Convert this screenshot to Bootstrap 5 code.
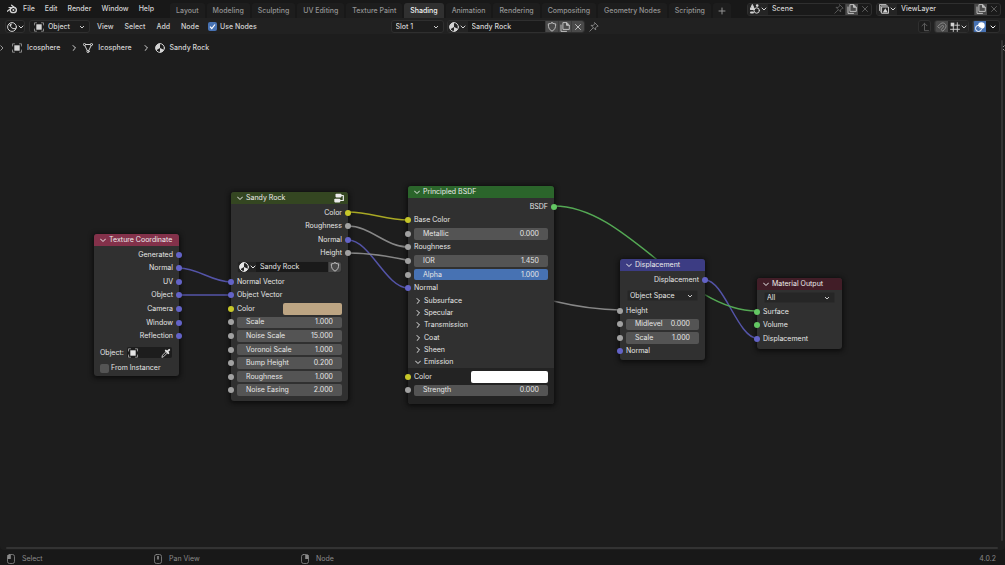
<!DOCTYPE html>
<html lang="en" data-bs-theme="dark">
<head>
<meta charset="utf-8">
<meta name="viewport" content="width=device-width, initial-scale=1">
<title>Shading – Sandy Rock</title>
<link href="https://cdn.jsdelivr.net/npm/bootstrap@5.3.0/dist/css/bootstrap.min.css" rel="stylesheet">
<style>
  :root { --purple:#6363c7; --yellow:#c7c729; --grey:#a1a1a1; --green:#63c763; --line:#2f2f2f; }
  body { font-family:Inter,"Liberation Sans",sans-serif; font-size:7px; font-weight:500; line-height:10px; background:#181818; color:#d4d4d4; }
  button, input, select { font:inherit; color:inherit; background:none; border:0; padding:0; margin:0; border-radius:0; }
  button { display:flex; align-items:center; justify-content:center; white-space:nowrap; }
  a { color:inherit; text-decoration:none; }
  svg { display:block; flex:none; overflow:visible; }
  .ic { width:10px; height:10px; fill:none; stroke:currentColor; stroke-width:1; stroke-linecap:round; stroke-linejoin:round; }
  .chev { width:6px; height:6px; }
  .pick { appearance:none; cursor:pointer; background:no-repeat right 4px center/6px 6px url("data:image/svg+xml,%3Csvg xmlns='http://www.w3.org/2000/svg' viewBox='0 0 6 6'%3E%3Cpath d='M1 2l2 2 2-2' fill='none' stroke='%23ccc'/%3E%3C/svg%3E"); }

  .topbar { height:18px; }
  .menus { gap:10px; padding-left:7px; }
  .brand { margin-right:-4px; }
  .tabs { margin-left:16px; gap:2px; padding-top:3px; }
  .tabs button { padding:0 6px; height:15px; background:#1d1d1d; color:#949494; border-radius:3px 3px 0 0; }
  .tabs .active { background:#303030; color:#f4f4f4; }
  .idbox { height:13px; width:125px; border:1px solid var(--line); border-radius:3px; background:#1a1a1a; overflow:hidden; }
  .idbox > button, .matbox > button { height:100%; }
  .idbox input, .matbox input { flex:1 1 0; min-width:0; padding-left:4px; background:#1a1a1a; }
  .drop { width:20px; gap:1px; background:#242424; }
  .tool { width:13px; background:#4a4a4a; color:#bdbdbd; border-left:1px solid #3c3c3c; }
  .lit { background:#4772b3; color:#fff; }
  .flat { width:13px; color:#5c5c5c; }
  .dim { color:#8a8a8a; }

  .toolrow { height:16px; background:#212121; padding:1px 5px 0; }
  .side { flex:1 1 0; }
  .side.tools { gap:3px; }
  .toolmenus { gap:11px; margin-left:7px; }
  .usenodes { gap:3px; margin-left:9px; }
  .box { height:13px; border:1px solid var(--line); border-radius:3px; background-color:#1d1d1d; }
  .modes { width:61px; }
  .modes select { flex:1 1 0; min-width:0; padding-left:4px; }
  .slotpick { width:53px; padding-left:4px; }
  .slots { margin-right:14px; gap:3px; }
  .matbox { height:13px; border:1px solid var(--line); border-radius:3px; overflow:hidden; background:#1a1a1a; }
  .slots .matbox { width:138px; }
  .tick { appearance:none; width:9px; height:9px; border-radius:2px; background:#545454; flex:none; }
  .tick:checked { background:#4772b3 center/7px 7px no-repeat url("data:image/svg+xml,%3Csvg xmlns='http://www.w3.org/2000/svg' viewBox='0 0 7 7'%3E%3Cpath d='M1 3.7l1.8 1.8L6 1.5' fill='none' stroke='%23fff' stroke-width='1.2'/%3E%3C/svg%3E"); }

  .canvas { background:#1d1d1d; min-height:0; overflow:hidden; border-radius:0 0 4px 4px; }
  .crumbs { padding:9px 0 0 12px; }
  .crumbs a { margin:0 11px 0 5px; }
  .crumbs .chev { margin-right:6px; }
  .scroll-y { position:absolute; right:2px; top:6px; bottom:9px; width:2px; background:#333; border-radius:1px; }
  .scroll-x { position:absolute; left:6px; right:7px; bottom:1px; height:2px; background:#333; border-radius:1px; }
  .edge { position:absolute; top:11px; width:4px; height:6px; color:#999; }
  .wires { position:absolute; left:0; top:0; fill:none; stroke-width:1.5; }

  /* graph nodes: free placement on the canvas */
  .gnode { position:absolute; background:#303030; border-radius:3px; box-shadow:0 1px 5px 1px #0b0b0b; font-weight:400; color:#e6e6e6; }
  .gnode h2 { font-size:7px; font-weight:400; line-height:10px; height:12px; margin:0; padding:0 4px 0 6px; gap:3px; border-radius:3px 3px 0 0; display:flex; align-items:center; color:#ececec; }
  #texcoord { left:94px; top:200px; width:85px; height:142px; } #texcoord h2 { background:#83314a; }
  #sandy { left:231px; top:158px; width:117px; height:209px; } #sandy h2 { background:#344621; }
  #bsdf { left:408px; top:152px; width:146px; height:218px; } #bsdf h2 { background:#2b652b; }
  #disp { left:620px; top:225px; width:85px; height:101px; } #disp h2 { background:#3c3c83; }
  #matout { left:757px; top:244px; width:85px; height:71px; } #matout h2 { background:#411d27; }
  .socks { display:grid; grid-template-columns:minmax(0,1fr); grid-auto-rows:1fr; list-style:none; margin:0; padding:0; }
  h2 + .socks { margin-top:2px; }
  .socks li { display:flex; align-items:center; position:relative; padding:0 6px; min-height:0; }
  .socks li.out { justify-content:flex-end; }
  .socks li::before { content:""; position:absolute; width:6px; height:6px; border-radius:50%; background:var(--c); left:-3px; }
  .socks li.out::before { left:auto; right:-3px; }
  .p { --c:var(--purple); } .y { --c:var(--yellow); } .g { --c:var(--grey); } .e { --c:var(--green); }
  .h14 { height:14px; } .h27 { height:27px; } .h41 { height:41px; } .h54 { height:54px; } .h95 { height:95px; } .h122 { height:122px; }
  .num { display:flex; align-items:center; flex:1 1 0; min-width:0; align-self:stretch; margin:1px 0; padding:0 9px; background:#545454; border-radius:2px; white-space:nowrap; }
  .num input { flex:1 1 0; width:0; min-width:0; text-align:right; }
  .num.on { background:#4772b3; }
  .swatch { margin:1px 0 1px auto; align-self:stretch; width:59px; border-radius:2px; }
  .sand { background:#bda583; } .white { width:77px; background:#fff; }
  .pickrow { display:grid; padding:3px 7px; }
  #matout .pickrow { padding:2px 7px; }
  .gpick { height:11px; padding-left:2px; background-color:#262626; border:1px solid #2b2b2b; border-radius:2px; line-height:9px; }
  #sandy .matbox { height:12px; margin:1px 6px 2px; }
  #sandy .matbox .drop { width:18px; }
  .panels { height:73px; display:grid; grid-auto-rows:1fr; padding:0 7px; }
  .panels button { justify-content:flex-start; gap:3px; }
  .subpanel { background:#232323; border-radius:0 0 3px 3px; padding-top:2px; height:36px; }
  .objrow { margin:4px 7px 0 6px; gap:3px; }
  .objfield { flex:1 1 0; height:11px; background:#1d1d1d; border-radius:2px; padding:0 1px; }
  .fromrow { margin:5px 6px 0; gap:2px; }

  .status { height:15px; color:#8a8a8a; padding:2px 9px 0 6px; font-weight:400; }
  .status .hint { width:147px; gap:6px; }
</style>
</head>
<body class="d-flex flex-column vh-100 overflow-hidden">

<svg width="0" height="0" class="position-absolute" aria-hidden="true">
  <symbol id="i-chev" viewBox="0 0 6 6"><path d="M1 2l2 2 2-2"/></symbol>
  <symbol id="i-right" viewBox="0 0 6 6"><path d="M2 .5L4.500 3 2 5.500"/></symbol>
  <symbol id="i-down" viewBox="0 0 6 6"><path d="M.5 2L3 4.500 5.500 2"/></symbol>
  <symbol id="i-blender" viewBox="0 0 10 10"><path d="M.3 7.300L5.200 3.500M2 3.500h4M4.600 1.200L8.300 4" stroke-width="1.200"/><ellipse cx="6.300" cy="6" rx="3.100" ry="2.700" stroke-width="1.300"/><circle cx="6.400" cy="5.900" r="1" fill="currentColor" stroke="none"/></symbol>
  <symbol id="i-sphere" viewBox="0 0 10 10"><circle cx="5" cy="5" r="4.400"/><path d="M8.700 6.500C6.500 7.300 3 6 3.500 3.200"/><path d="M2 3.500Q3 1.700 5 1.600L4 4z" fill="currentColor" stroke="none"/></symbol>
  <symbol id="i-object" viewBox="0 0 10 10"><path d="M.5 3V.8H2.500M7.500 .8h2V3M9.500 7v2.200h-2M2.500 9.200h-2V7" stroke-width=".8" opacity=".7"/><rect x="2.300" y="2.300" width="5.400" height="5.400" fill="currentColor" stroke="none"/></symbol>
  <symbol id="i-mesh" viewBox="0 0 10 10"><path d="M2.800 1.500h4.400M1.900 2.700l2.400 5M8.100 2.700l-2.400 5"/><circle cx="1.500" cy="1.500" r="1.100"/><circle cx="8.500" cy="1.500" r="1.100"/><circle cx="5" cy="8.500" r="1.100"/></symbol>
  <symbol id="i-mat" viewBox="0 0 10 10"><circle cx="5" cy="5" r="4.400"/><path d="M5 .6v4.400l-3.700 2.300A4.400 4.400 0 0 1 5 .6zM5 5l3.900 1.800A4.400 4.400 0 0 1 5 9.400z" fill="currentColor" stroke="none"/></symbol>
  <symbol id="i-shield" viewBox="0 0 10 10"><path d="M5 .8Q3.500 1.900 1.300 1.900C1.300 5.500 2 7.500 5 9.200 8 7.500 8.700 5.500 8.700 1.900 6.500 1.900 5 .8 5 .8z"/></symbol>
  <symbol id="i-copy" viewBox="0 0 10 10"><path d="M3.300 .6h3.500L9.300 3v4.400h-6z"/><path d="M6.500 .8V3.300H9" fill="currentColor"/><path d="M1 3v6.400h5.500"/></symbol>
  <symbol id="i-x" viewBox="0 0 10 10"><path d="M2.500 2.500l5 5M7.500 2.500l-5 5"/></symbol>
  <symbol id="i-pin" viewBox="0 0 10 10"><path d="M5.800 .8l3.400 3.400-1.200.1L6.500 6l.2 2L2 3.300l2 .2 1.700-1.600zM4 6L.8 9.200" stroke-width=".9"/></symbol>
  <symbol id="i-up" viewBox="0 0 10 10"><path d="M2 3.800L4.500 1.300 7 3.800M4.500 1.300v7.400H8.500"/></symbol>
  <symbol id="i-magnet" viewBox="0 0 10 10"><path d="M.9 4.200L3.900 1.500C7 -.5 10.500 3 8.400 6.100L5.900 9.200 4.100 7.700 6.400 5C7 3.800 6 3 5 3.600L2.500 5.900z"/></symbol>
  <symbol id="i-snap" viewBox="0 0 10 10"><path d="M3.300 4v5.500M7.300 .7v8.800M.5 7.300h9M5 3.200h4.500" stroke-width=".9"/><rect x=".7" y=".7" width="3.600" height="3.600" fill="currentColor" stroke="none"/></symbol>
  <symbol id="i-overlay" viewBox="0 0 10 10"><circle cx="3.600" cy="6.400" r="3.100"/><circle cx="6.400" cy="3.600" r="3.300" fill="currentColor" stroke="none"/><path d="M3.400 4.600a3.200 3.200 0 0 0 2.800 2" stroke="#4772b3"/></symbol>
  <symbol id="i-scene" viewBox="0 0 10 10"><path d="M2.500 .8l2 4.700h-4z" fill="currentColor"/><circle cx="6.700" cy="6.500" r="2.700"/><circle cx="7.200" cy="1.600" r="1.300" fill="currentColor" stroke="none"/><path d="M1 8.500h2" stroke-width="2"/></symbol>
  <symbol id="i-layers" viewBox="0 0 10 10"><rect x="3" y="3" width="6.500" height="6.300" stroke-width=".9"/><path d="M3.800 8.500l2.500-4.200 2.500 4.200z" fill="currentColor" stroke="none"/><path d="M1.800 8V1.800h6.500M.5 6.500V.5h6.500" stroke-width=".8"/></symbol>
  <symbol id="i-group" viewBox="0 0 10 10"><g fill="currentColor" stroke="none"><rect x="1.500" y=".8" width="6" height="3.600" rx=".8"/><rect x=".3" y="5.800" width="6" height="3.600" rx=".8"/></g><path d="M7.500 2.500h1.800v5H6.500" stroke-width="1.200"/></symbol>
  <symbol id="i-dropper" viewBox="0 0 10 10"><path d="M1 9l.5-1.800 3.800-3.800 1.300 1.300-3.800 3.800z" stroke-width=".8"/><path d="M4.800 2.600l2.600 2.600M6.300 3.700L8.200 1.800" stroke-width="1.900"/></symbol>
  <symbol id="i-ml" viewBox="0 0 10 10"><rect x="1.500" y=".5" width="7" height="9" rx="2" stroke-width=".8"/><path d="M1.500 1h3.300v4H1.500z" fill="currentColor" stroke="none"/></symbol>
  <symbol id="i-mm" viewBox="0 0 10 10"><rect x="1.500" y=".5" width="7" height="9" rx="2" stroke-width=".8"/><rect x="4.200" y="2" width="1.600" height="3.500" fill="currentColor" stroke="none"/></symbol>
  <symbol id="i-mr" viewBox="0 0 10 10"><rect x="1.500" y=".5" width="7" height="9" rx="2" stroke-width=".8"/><path d="M5.200 1h3.300v4H5.200z" fill="currentColor" stroke="none"/></symbol>
</svg>

<header class="topbar d-flex flex-shrink-0">
  <nav class="menus d-flex align-items-center" aria-label="Main menu">
    <button aria-label="Blender" class="brand"><svg class="ic"><use href="#i-blender"/></svg></button>
    <button>File</button><button>Edit</button><button>Render</button><button>Window</button><button>Help</button>
  </nav>
  <nav class="tabs d-flex" aria-label="Workspaces">
    <button>Layout</button><button>Modeling</button><button>Sculpting</button><button>UV Editing</button><button>Texture Paint</button><button class="active">Shading</button><button>Animation</button><button>Rendering</button><button>Compositing</button><button>Geometry Nodes</button><button>Scripting</button><button aria-label="Add workspace"><svg class="ic chev"><path d="M3 0v6M0 3h6"/></svg></button>
  </nav>
  <div class="ms-auto d-flex gap-1 align-items-center pe-1">
    <div class="idbox d-flex align-items-center">
      <button class="drop" aria-label="Browse scene"><svg class="ic"><use href="#i-scene"/></svg><svg class="ic chev"><use href="#i-chev"/></svg></button>
      <input aria-label="Scene" value="Scene">
      <button class="flat" aria-label="Pin scene"><svg class="ic"><use href="#i-pin"/></svg></button>
      <button class="tool" aria-label="New scene"><svg class="ic"><use href="#i-copy"/></svg></button>
      <button class="flat" aria-label="Delete scene"><svg class="ic"><use href="#i-x"/></svg></button>
    </div>
    <div class="idbox d-flex align-items-center">
      <button class="drop" aria-label="Browse view layer"><svg class="ic"><use href="#i-layers"/></svg><svg class="ic chev"><use href="#i-chev"/></svg></button>
      <input aria-label="View layer" value="ViewLayer">
      <button class="tool" aria-label="New view layer"><svg class="ic"><use href="#i-copy"/></svg></button>
      <button class="flat" aria-label="Remove view layer"><svg class="ic"><use href="#i-x"/></svg></button>
    </div>
  </div>
</header>

<div class="toolrow d-flex align-items-center flex-shrink-0">
  <div class="side d-flex align-items-center">
    <button class="box drop" aria-label="Editor type"><svg class="ic"><use href="#i-sphere"/></svg><svg class="ic chev"><use href="#i-chev"/></svg></button>
    <div class="modes box d-flex align-items-center ms-1 ps-1"><svg class="ic"><use href="#i-object"/></svg><select class="pick" aria-label="Shader type"><option>Object</option></select></div>
    <div class="toolmenus d-flex"><button>View</button><button>Select</button><button>Add</button><button>Node</button></div>
    <label class="usenodes d-flex align-items-center"><input type="checkbox" class="tick" checked>Use Nodes</label>
  </div>
  <div class="slots d-flex align-items-center">
    <select class="pick box slotpick" aria-label="Slot"><option>Slot 1</option></select>
    <div class="matbox d-flex align-items-center">
      <button class="drop" aria-label="Browse material"><svg class="ic"><use href="#i-mat"/></svg><svg class="ic chev"><use href="#i-chev"/></svg></button>
      <input aria-label="Material name" value="Sandy Rock">
      <button class="tool" aria-label="Fake user"><svg class="ic"><use href="#i-shield"/></svg></button>
      <button class="tool" aria-label="New material"><svg class="ic"><use href="#i-copy"/></svg></button>
      <button class="tool" aria-label="Unlink material"><svg class="ic"><use href="#i-x"/></svg></button>
    </div>
    <button class="flat dim" aria-label="Pin"><svg class="ic"><use href="#i-pin"/></svg></button>
  </div>
  <div class="side tools d-flex justify-content-end">
    <button class="box flat" aria-label="Parent node tree"><svg class="ic"><use href="#i-up"/></svg></button>
    <div class="matbox d-flex"><button class="tool dim" aria-label="Snap"><svg class="ic"><use href="#i-magnet"/></svg></button><button class="drop" aria-label="Snap to"><svg class="ic"><use href="#i-snap"/></svg><svg class="ic chev"><use href="#i-chev"/></svg></button></div>
    <div class="matbox d-flex"><button class="tool lit" aria-label="Overlays"><svg class="ic"><use href="#i-overlay"/></svg></button><button class="flat text-light" aria-label="Overlay options"><svg class="ic chev"><use href="#i-chev"/></svg></button></div>
  </div>
</div>

<main class="canvas position-relative flex-grow-1">
  <nav class="crumbs d-flex align-items-center" aria-label="Path">
    <svg class="ic"><use href="#i-object"/></svg><a href="#">Icosphere</a>
    <svg class="ic chev"><use href="#i-right"/></svg>
    <svg class="ic"><use href="#i-mesh"/></svg><a href="#">Icosphere</a>
    <svg class="ic chev"><use href="#i-right"/></svg>
    <svg class="ic"><use href="#i-mat"/></svg><a href="#">Sandy Rock</a>
  </nav>

  <svg class="wires" width="1005" height="516" aria-hidden="true">
    <g stroke="#5454a8"><path d="M179 234C198 234 212 248 231 248M179 261H231M348 206C370 206 386 254 408 254M705 246C724 246 738 304 757 304"/></g>
    <path stroke="#a8a824" d="M348 178C370 178 386 186 408 186"/>
    <path stroke="#878787" d="M348 192C370 192 386 213 408 213M348 219C435 219 533 276 620 276"/>
    <path stroke="#54a854" d="M554 172C627 172 684 277 757 277"/>
  </svg>

  <section class="gnode" id="texcoord">
    <h2><svg class="ic chev"><use href="#i-down"/></svg>Texture Coordinate</h2>
    <ul class="socks h95">
      <li class="out p">Generated</li><li class="out p">Normal</li><li class="out p">UV</li><li class="out p">Object</li><li class="out p">Camera</li><li class="out p">Window</li><li class="out p">Reflection</li>
    </ul>
    <div class="objrow d-flex align-items-center">Object:
      <button class="objfield justify-content-between" aria-label="Object"><svg class="ic"><use href="#i-object"/></svg><svg class="ic"><use href="#i-dropper"/></svg></button>
    </div>
    <label class="fromrow d-flex align-items-center"><input type="checkbox" class="tick">From Instancer</label>
  </section>

  <section class="gnode" id="sandy">
    <h2><svg class="ic chev"><use href="#i-down"/></svg>Sandy Rock<svg class="ic ms-auto"><use href="#i-group"/></svg></h2>
    <ul class="socks h54">
      <li class="out y">Color</li><li class="out g">Roughness</li><li class="out p">Normal</li><li class="out g">Height</li>
    </ul>
    <div class="matbox d-flex">
      <button class="drop" aria-label="Browse node group"><svg class="ic"><use href="#i-mat"/></svg><svg class="ic chev"><use href="#i-chev"/></svg></button>
      <input aria-label="Node group" value="Sandy Rock">
      <button class="tool" aria-label="Fake user"><svg class="ic"><use href="#i-shield"/></svg></button>
    </div>
    <ul class="socks h122">
      <li class="p">Normal Vector</li><li class="p">Object Vector</li>
      <li class="y">Color<button class="swatch sand" aria-label="Color"></button></li>
      <li class="g"><label class="num">Scale<input value="1.000"></label></li>
      <li class="g"><label class="num">Noise Scale<input value="15.000"></label></li>
      <li class="g"><label class="num">Voronoi Scale<input value="1.000"></label></li>
      <li class="g"><label class="num">Bump Height<input value="0.200"></label></li>
      <li class="g"><label class="num">Roughness<input value="1.000"></label></li>
      <li class="g"><label class="num">Noise Easing<input value="2.000"></label></li>
    </ul>
  </section>

  <section class="gnode" id="bsdf">
    <h2><svg class="ic chev"><use href="#i-down"/></svg>Principled BSDF</h2>
    <ul class="socks h95">
      <li class="out e">BSDF</li>
      <li class="y">Base Color</li>
      <li class="g"><label class="num">Metallic<input value="0.000"></label></li>
      <li class="g">Roughness</li>
      <li class="g"><label class="num">IOR<input value="1.450"></label></li>
      <li class="g"><label class="num on">Alpha<input value="1.000"></label></li>
      <li class="p">Normal</li>
    </ul>
    <div class="panels">
      <button><svg class="ic chev"><use href="#i-right"/></svg>Subsurface</button>
      <button><svg class="ic chev"><use href="#i-right"/></svg>Specular</button>
      <button><svg class="ic chev"><use href="#i-right"/></svg>Transmission</button>
      <button><svg class="ic chev"><use href="#i-right"/></svg>Coat</button>
      <button><svg class="ic chev"><use href="#i-right"/></svg>Sheen</button>
      <button><svg class="ic chev"><use href="#i-down"/></svg>Emission</button>
    </div>
    <div class="subpanel">
      <ul class="socks h27">
        <li class="y">Color<button class="swatch white" aria-label="Emission color"></button></li>
        <li class="g"><label class="num">Strength<input value="0.000"></label></li>
      </ul>
    </div>
  </section>

  <section class="gnode" id="disp">
    <h2><svg class="ic chev"><use href="#i-down"/></svg>Displacement</h2>
    <ul class="socks h14"><li class="out p">Displacement</li></ul>
    <div class="pickrow"><select class="pick gpick" aria-label="Space"><option>Object Space</option></select></div>
    <ul class="socks h54">
      <li class="g">Height</li>
      <li class="g"><label class="num">Midlevel<input value="0.000"></label></li>
      <li class="g"><label class="num">Scale<input value="1.000"></label></li>
      <li class="p">Normal</li>
    </ul>
  </section>

  <section class="gnode" id="matout">
    <h2><svg class="ic chev"><use href="#i-down"/></svg>Material Output</h2>
    <div class="pickrow"><select class="pick gpick" aria-label="Target"><option>All</option></select></div>
    <ul class="socks h41"><li class="e">Surface</li><li class="e">Volume</li><li class="p">Displacement</li></ul>
  </section>

  <svg class="edge start-0" viewBox="0 0 4 6" fill="none" stroke="currentColor"><path d="M.5 .5L3 3 .5 5.500"/></svg>
  <svg class="edge end-0" viewBox="0 0 4 6" fill="none" stroke="currentColor"><path d="M3.500 .5L1 3l2.500 2.500"/></svg>
  <div class="scroll-y"></div>
  <div class="scroll-x"></div>
</main>

<footer class="status d-flex align-items-center flex-shrink-0">
  <div class="hint d-flex align-items-center"><svg class="ic"><use href="#i-ml"/></svg>Select</div>
  <div class="hint d-flex align-items-center"><svg class="ic"><use href="#i-mm"/></svg>Pan View</div>
  <div class="hint d-flex align-items-center"><svg class="ic"><use href="#i-mr"/></svg>Node</div>
  <span class="ms-auto">4.0.2</span>
</footer>
<script src="https://cdn.jsdelivr.net/npm/bootstrap@5.3.0/dist/js/bootstrap.bundle.min.js"></script>
</body>
</html>
